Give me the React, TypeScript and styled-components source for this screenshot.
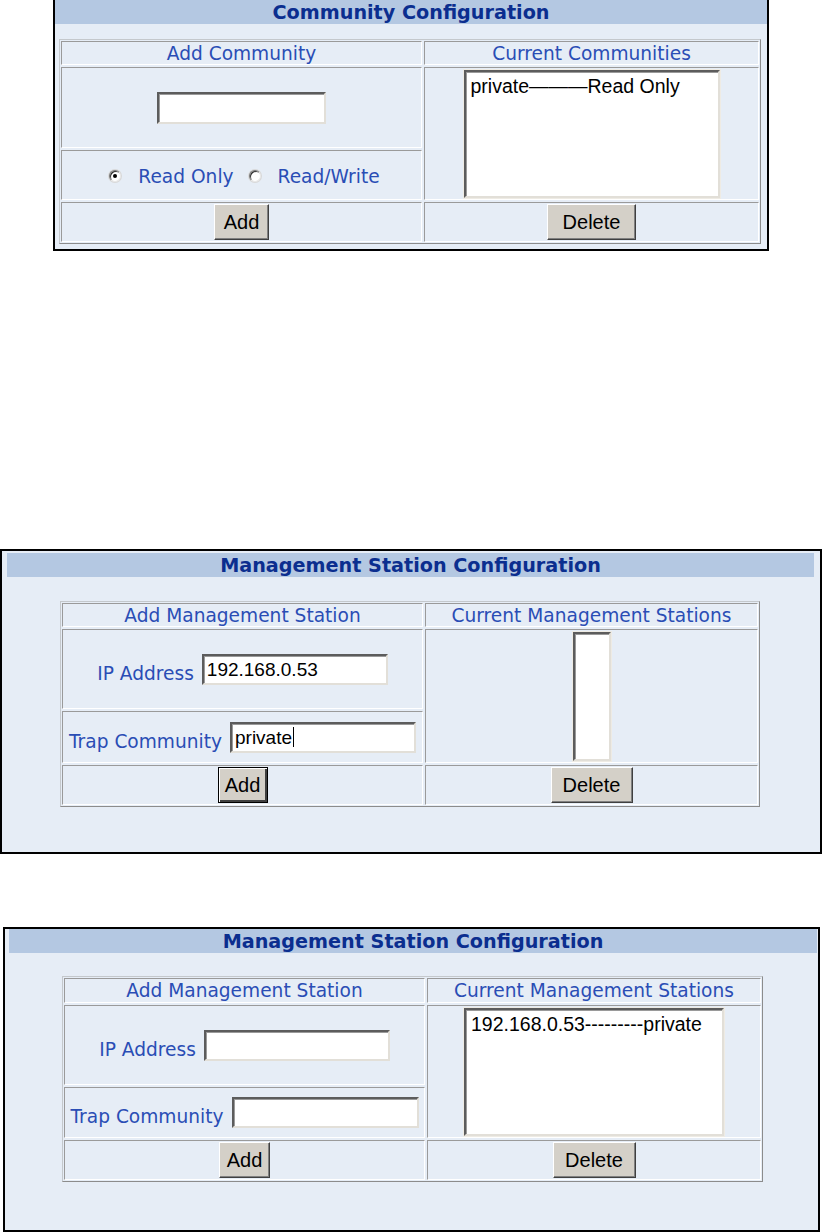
import React from 'react';
import styled, { createGlobalStyle } from 'styled-components';

const GlobalStyle = createGlobalStyle`
  html, body {
    margin: 0;
    padding: 0;
    background: #ffffff;
  }
  * {
    box-sizing: border-box;
  }
`;

const Page = styled.div`
  display: flex;
  flex-direction: column;
  align-items: flex-start;
`;

const Panel = styled.div<{ $x: number; $top: number; $w: number; $h: number; $noTop?: boolean }>`
  margin-left: ${p => p.$x}px;
  margin-top: ${p => p.$top}px;
  width: ${p => p.$w}px;
  height: ${p => p.$h}px;
  background: #e6edf6;
  border: 2px solid #000;
  border-top-width: ${p => (p.$noTop ? 0 : 2)}px;
  display: flex;
  flex-direction: column;
`;

const TitleBar = styled.div<{ $m: string }>`
  margin: ${p => p.$m};
  height: 24px;
  background: #b4c8e2;
  color: #0b2e8f;
  font-family: 'DejaVu Sans', Verdana, sans-serif;
  font-weight: bold;
  font-size: 19.2px;
  display: flex;
  align-items: center;
  justify-content: center;
`;

const Table = styled.div<{ $mt: number; $ml: number; $w: number; $left: number; $rows: string }>`
  margin-top: ${p => p.$mt}px;
  margin-left: ${p => p.$ml}px;
  width: ${p => p.$w}px;
  display: grid;
  grid-template-columns: ${p => p.$left}px 1fr;
  grid-template-rows: ${p => p.$rows};
  gap: 2px;
  padding: 1px;
  border: 1px solid;
  border-color: #c4c8cc #8c8c8c #8c8c8c #c4c8cc;
`;

const Cell = styled.div<{ $span?: boolean; $col: number }>`
  grid-column: ${p => p.$col};
  grid-row: ${p => (p.$span ? 'span 2' : 'auto')};
  border: 1px solid;
  border-color: #9a9a9a #ffffff #ffffff #9a9a9a;
  display: flex;
  align-items: center;
  justify-content: center;
`;

const HeadText = styled.span`
  font-family: 'DejaVu Sans', Verdana, sans-serif;
  font-size: 18.6px;
  color: #2a4db5;
  white-space: nowrap;
`;

const FieldRow = styled.div`
  display: flex;
  align-items: center;
  gap: 8px;
`;

const Label = styled.span<{ $drop?: number }>`
  font-family: 'DejaVu Sans', Verdana, sans-serif;
  font-size: 18.6px;
  color: #2a4db5;
  white-space: nowrap;
  padding-top: ${p => p.$drop ?? 0}px;
`;

const TextBox = styled.div<{ $w: number; $h: number }>`
  width: ${p => p.$w}px;
  height: ${p => p.$h}px;
  background: #fff;
  border: 2px solid;
  border-color: #5c5c5c #e2dfd8 #e2dfd8 #5c5c5c;
  box-shadow: inset 1px 1px 0 #9a9a9a;
  padding: 0 3px;
  font-family: 'Liberation Sans', Arial, sans-serif;
  font-size: 19px;
  line-height: 27px;
  color: #000;
  white-space: nowrap;
  display: flex;
  align-items: center;
`;

const Caret = styled.span`
  display: inline-block;
  width: 1px;
  height: 20px;
  background: #000;
  margin-left: 1px;
`;

const ListBox = styled.div<{ $w: number; $h: number }>`
  width: ${p => p.$w}px;
  height: ${p => p.$h}px;
  background: #fff;
  border: 2px solid;
  border-color: #5c5c5c #e2dfd8 #e2dfd8 #5c5c5c;
  box-shadow: inset 1px 1px 0 #9a9a9a, 0 0 0 1px #eeebe4;
  padding: 3px 5px;
  font-family: 'Liberation Sans', Arial, sans-serif;
  font-size: 19.5px;
  line-height: 22px;
  color: #000;
  white-space: nowrap;
  overflow: hidden;
`;

const Button = styled.div<{ $w: number; $focused?: boolean }>`
  width: ${p => p.$w}px;
  height: 36px;
  background: #d4d0c8;
  border: 1px solid;
  border-color: ${p => (p.$focused ? '#000' : '#fff #404040 #404040 #fff')};
  box-shadow: ${p =>
    p.$focused
      ? 'inset 1px 1px 0 #fff, inset -2px -2px 0 #404040'
      : 'inset -1px -1px 0 #808080'};
  font-family: 'Liberation Sans', Arial, sans-serif;
  font-size: 20px;
  color: #000;
  display: flex;
  align-items: center;
  justify-content: center;
`;

const RadioGroup = styled.div`
  display: flex;
  align-items: center;
  margin-top: 2px;
  margin-left: 6px;
`;

const RadioItem = styled.label<{ $gap: number }>`
  display: flex;
  align-items: center;
  margin-left: ${p => p.$gap}px;
`;

const RadioDot = styled.span<{ $checked?: boolean }>`
  width: 12px;
  height: 12px;
  border-radius: 50%;
  background: #fff;
  border: 1px solid;
  border-color: #7a7a7a #e8e8e8 #e8e8e8 #7a7a7a;
  box-shadow: inset 1px 1px 0 #303030, 0 0 0 1px #d8d8d8;
  position: relative;
  margin-right: 17px;

  &::after {
    content: '';
    display: ${p => (p.$checked ? 'block' : 'none')};
    position: absolute;
    left: 3px;
    top: 3px;
    width: 4px;
    height: 4px;
    border-radius: 50%;
    background: #000;
  }
`;

const App: React.FC = () => {
  return (
    <Page>
      <GlobalStyle />

      <Panel $x={53} $top={0} $w={716} $h={251} $noTop>
        <TitleBar $m="0">Community Configuration</TitleBar>
        <Table $mt={15} $ml={4} $w={702} $left={361} $rows="24px 81px 50px 40px">
          <Cell $col={1}><HeadText>Add Community</HeadText></Cell>
          <Cell $col={2}><HeadText>Current Communities</HeadText></Cell>
          <Cell $col={1}><TextBox $w={169} $h={32} /></Cell>
          <Cell $col={2} $span>
            <ListBox $w={256} $h={128}>private———Read Only</ListBox>
          </Cell>
          <Cell $col={1}>
            <RadioGroup>
              <RadioItem $gap={0}>
                <RadioDot $checked />
                <Label>Read Only</Label>
              </RadioItem>
              <RadioItem $gap={15}>
                <RadioDot />
                <Label>Read/Write</Label>
              </RadioItem>
            </RadioGroup>
          </Cell>
          <Cell $col={1}><Button $w={55}>Add</Button></Cell>
          <Cell $col={2}><Button $w={89}>Delete</Button></Cell>
        </Table>
      </Panel>

      <Panel $x={0} $top={298} $w={822} $h={305}>
        <TitleBar $m="2px 6px 0 5px">Management Station Configuration</TitleBar>
        <Table $mt={24} $ml={58} $w={700} $left={361} $rows="24px 80px 52px 40px">
          <Cell $col={1}><HeadText>Add Management Station</HeadText></Cell>
          <Cell $col={2}><HeadText>Current Management Stations</HeadText></Cell>
          <Cell $col={1}>
            <FieldRow>
              <Label $drop={8}>IP Address</Label>
              <TextBox $w={186} $h={31}>192.168.0.53</TextBox>
            </FieldRow>
          </Cell>
          <Cell $col={2} $span>
            <ListBox $w={38} $h={129} />
          </Cell>
          <Cell $col={1}>
            <FieldRow>
              <Label $drop={8}>Trap Community</Label>
              <TextBox $w={186} $h={31}>private<Caret /></TextBox>
            </FieldRow>
          </Cell>
          <Cell $col={1}><Button $w={50} $focused>Add</Button></Cell>
          <Cell $col={2}><Button $w={82}>Delete</Button></Cell>
        </Table>
      </Panel>

      <Panel $x={3} $top={73} $w={817} $h={305}>
        <TitleBar $m="0 1px 0 4px">Management Station Configuration</TitleBar>
        <Table $mt={23} $ml={57} $w={701} $left={361} $rows="25px 80px 51px 40px">
          <Cell $col={1}><HeadText>Add Management Station</HeadText></Cell>
          <Cell $col={2}><HeadText>Current Management Stations</HeadText></Cell>
          <Cell $col={1}>
            <FieldRow>
              <Label $drop={8}>IP Address</Label>
              <TextBox $w={186} $h={31} />
            </FieldRow>
          </Cell>
          <Cell $col={2} $span>
            <ListBox $w={260} $h={128}>192.168.0.53---------private</ListBox>
          </Cell>
          <Cell $col={1}>
            <FieldRow>
              <Label $drop={8}>Trap Community</Label>
              <TextBox $w={187} $h={31} />
            </FieldRow>
          </Cell>
          <Cell $col={1}><Button $w={51}>Add</Button></Cell>
          <Cell $col={2}><Button $w={83}>Delete</Button></Cell>
        </Table>
      </Panel>
    </Page>
  );
};

export default App;
